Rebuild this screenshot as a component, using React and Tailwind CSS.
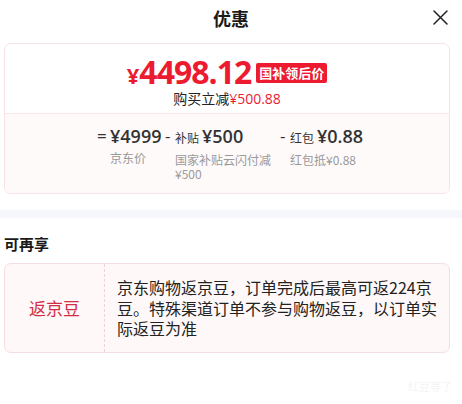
import React from 'react';

const CJK = "'Noto Sans CJK SC', 'Noto Sans', sans-serif";
const NUM = "'Open Sans', 'Noto Sans CJK SC', sans-serif";

const Part = ({ op, opW, label, value, note }) => (
  <div className="flex items-start">
    <span className="text-[17px] leading-[24px] text-[#333] shrink-0" style={{ fontFamily: NUM, width: opW }}>{op}</span>
    <div className="flex flex-col">
      <div className="flex items-baseline leading-[24px] text-[#333] whitespace-nowrap">
        {label && <span className="text-[12px] mr-[3px]">{label}</span>}
        <span className="text-[18px] font-semibold" style={{ fontFamily: NUM }}>{value}</span>
      </div>
      <div className="mt-[3px] text-[12px] leading-[14px] text-[#999] max-w-[100px]">{note}</div>
    </div>
  </div>
);

const App = () => {
  return (
    <div className="w-[462px] h-[404px] bg-white relative overflow-hidden" style={{ fontFamily: CJK }}>
      {/* Header */}
      <div className="relative h-[37px] flex items-center justify-center">
        <span className="text-[18px] font-bold text-[#1a1a1a]">优惠</span>
        <svg className="absolute right-[13px] top-[9px]" width="17" height="17" viewBox="0 0 17 17" fill="none" stroke="#222" strokeWidth="1.5" strokeLinecap="round">
          <path d="M2 2 L15 15 M15 2 L2 15" />
        </svg>
      </div>

      {/* Price card */}
      <div className="mx-[4px] mt-[6px] w-[446px] rounded-[7px] border border-[#f6e3e5] overflow-hidden">
        <div className="flex flex-col items-center pt-[11px] pb-[5px] border-b border-[#f8e8ea]">
          <div className="flex items-center h-[34px]">
            <span className="text-[#ec1b30] font-bold leading-none flex items-baseline" style={{ fontFamily: NUM }}>
              <span className="text-[22px]">¥</span>
              <span className="text-[32px] tracking-[-1px]">4498.12</span>
            </span>
            <span className="ml-[5px] mt-[1px] bg-[#ec1b30] text-white text-[13px] font-bold leading-[20px] px-[3px] rounded-[2px]">国补领后价</span>
          </div>
          <div className="text-[14px] leading-[18px] text-[#222]">
            购买立减<span className="text-[#ec1b30]" style={{ fontFamily: NUM }}>¥500.88</span>
          </div>
        </div>
        <div className="bg-[#fffafa] pt-[10px] pb-[12px] pl-[92px] flex">
          <div className="w-[68px]"><Part op="=" opW="13px" value="¥4999" note="京东价" /></div>
          <div className="w-[115px]"><Part op="-" opW="10px" label="补贴" value="¥500" note="国家补贴云闪付减¥500" /></div>
          <div><Part op="-" opW="10px" label="红包" value="¥0.88" note="红包抵¥0.88" /></div>
        </div>
      </div>

      {/* gap band */}
      <div className="mt-[16px] h-[8px] bg-[#f6f7fa]" />

      <div className="px-[4px] pt-[14px] text-[15px] font-bold leading-[24px] text-[#1a1a1a]">可再享</div>

      <div className="mx-[4px] mt-[7px] w-[446px] rounded-[7px] border border-[#f3dfe2] bg-[#fff8f8] flex">
        <div className="w-[100px] flex items-center justify-center border-r border-dashed border-[#ecd5d8]">
          <span className="text-[17px] text-[#d02e46]">返京豆</span>
        </div>
        <div className="flex-1 pl-[12px] pr-[12px] py-[13px] text-[16px] leading-[20.5px] text-[#222]">
          京东购物返京豆，订单完成后最高可返224京豆。特殊渠道订单不参与购物返豆，以订单实际返豆为准
        </div>
      </div>

      <div className="absolute right-[10px] bottom-[10px] text-[11px] text-[#f4f4f4]">红豆等了</div>
    </div>
  );
};

export default App;
